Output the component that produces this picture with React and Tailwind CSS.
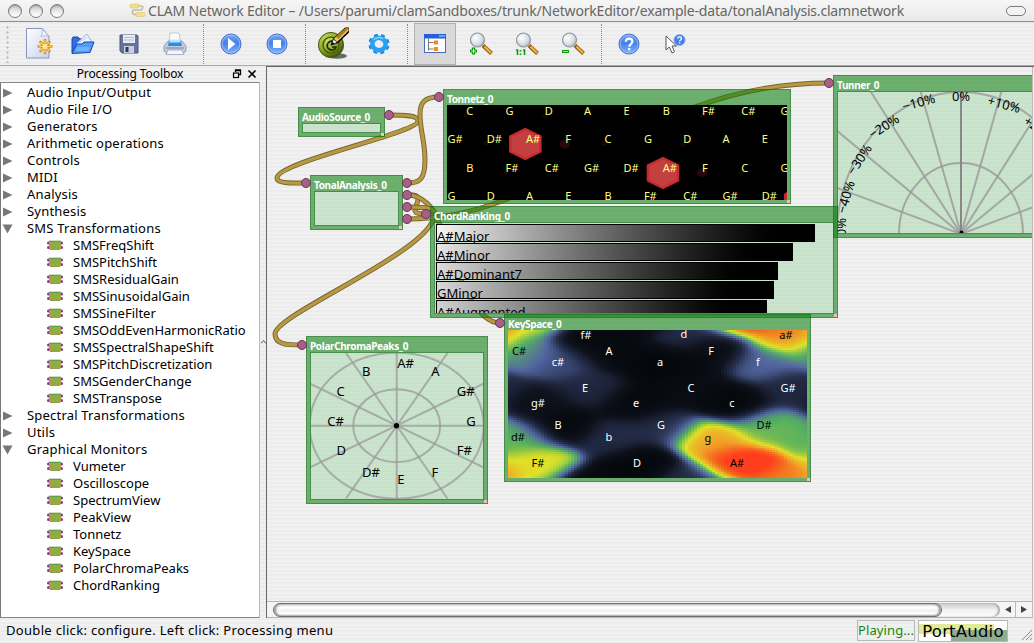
import React from "react";

const GREEN = "border-[rgba(13,127,17,0.58)]";

/* ---------- toolbar icons ---------- */

const NewIcon = () => (
  <svg width="30" height="34" viewBox="0 0 30 34">
    <defs>
      <linearGradient id="pg" x1="0" y1="0" x2="1" y2="1">
        <stop offset="0" stopColor="#fff" />
        <stop offset="1" stopColor="#c9d2ec" />
      </linearGradient>
    </defs>
    <path d="M2.500 1.500h16l6.500 8v21.500h-22.500z" fill="url(#pg)" stroke="#8b95bb" />
    <path d="M18 1.500c1 3 0 6-1 8 3-1 6-1 8 0z" fill="#f2f4fc" stroke="#a5aecb" strokeWidth=".8" />
    <g stroke="#e08a12" strokeWidth="2.6" strokeLinecap="round">
      <path d="M21 13v13M14.500 19.500h13M16.500 15l9 9M25.500 15l-9 9" />
    </g>
    <g stroke="#ffd45c" strokeWidth="1.2" strokeLinecap="round">
      <path d="M21 13.500v12M15 19.500h12M17 15.500l8 8M25 15.500l-8 8" />
    </g>
    <circle cx="21" cy="19.500" r="2.500" fill="#ffe79a" />
  </svg>
);

const OpenIcon = () => (
  <svg width="24" height="22" viewBox="0 0 24 22">
    <path d="M1 20V6l1-2h5l2 2h10v5" fill="#2f6fe0" stroke="#1746b4" />
    <path d="M6 10L16 1l5 8-3 5H6z" fill="#eef4ff" stroke="#8fa6d8" strokeWidth=".8" />
    <path d="M8 10l8-6" stroke="#b9c9ea" />
    <path d="M1 20.500L6 11h5l2-2h10l-4 10.500z" fill="#4f9bf6" stroke="#1746b4" />
    <path d="M6 14h13l-1.500 4H4z" fill="#7bbcff" opacity=".7" />
  </svg>
);

const SaveIcon = () => (
  <svg width="20" height="20" viewBox="0 0 20 20">
    <path d="M1 1h17l1 1v17H3l-2-2z" fill="#66749b" stroke="#4a5780" />
    <rect x="4" y="1" width="12" height="8" fill="#e8ecf6" />
    <path d="M5 3.500h10M5 6h10" stroke="#b3bcd3" />
    <rect x="5" y="12" width="10" height="7" fill="#c9cfdf" />
    <rect x="6.500" y="13" width="3" height="5" fill="#2f3a5c" />
  </svg>
);

const PrintIcon = () => (
  <svg width="24" height="24" viewBox="0 0 24 24">
    <path d="M7 1h9l2 11H6z" fill="#fdfdfe" stroke="#b5bccd" strokeWidth=".8" />
    <path d="M1 14l4-5h14l4 5v5l-2 2H3l-2-2z" fill="#c4cbdc" stroke="#8790a8" strokeWidth=".8" />
    <path d="M6 9h12l1 5H5z" fill="#2c8bea" />
    <path d="M7 7.500h10l.6 3H6.400z" fill="#b9e6ff" />
    <path d="M5 18h14l2 4.500H3z" fill="#f5f6fa" stroke="#9aa2b8" strokeWidth=".8" />
    <path d="M3 16h18" stroke="#7a839b" />
  </svg>
);

const Ball = ({ children, id }) => (
  <svg width="22" height="22" viewBox="0 0 22 22">
    <defs>
      <linearGradient id={id} x1="0" y1="0" x2="0" y2="1">
        <stop offset="0" stopColor="#7ba8f4" />
        <stop offset=".45" stopColor="#4480ea" />
        <stop offset="1" stopColor="#7fb6ff" />
      </linearGradient>
    </defs>
    <circle cx="11" cy="11" r="10" fill={`url(#${id})`} stroke="#4a70c8" strokeWidth="1" />
    <circle cx="11" cy="11" r="8.800" fill="none" stroke="#a9c8fb" strokeWidth=".7" />
    {children}
  </svg>
);

const EditIcon = () => (
  <svg width="32" height="33" viewBox="0 0 32 33">
    <defs>
      <radialGradient id="ed" cx=".35" cy=".3" r=".8">
        <stop offset="0" stopColor="#cbe368" />
        <stop offset=".55" stopColor="#86a722" />
        <stop offset="1" stopColor="#2c3b06" />
      </radialGradient>
    </defs>
    <ellipse cx="20" cy="29" rx="10" ry="2.800" fill="#222" opacity=".65" />
    <circle cx="14" cy="18" r="12.600" fill="url(#ed)" stroke="#4c5f12" />
    <circle cx="14" cy="18" r="8" fill="none" stroke="#4c600f" strokeWidth="1.600" />
    <path d="M18 15.500a4.500 4.500 0 1 0 1 4.500h-4" fill="none" stroke="#1d2605" strokeWidth="1.600" />
    <path d="M14 18l3-7 11-10h4v3L20 16z" fill="#e9c46a" stroke="#111" strokeWidth="1" />
    <path d="M19 9.500L28.500 1H32L21 12z" fill="#a77a1c" />
    <path d="M14 18l2.500-6 4 3.500z" fill="#f7efe0" stroke="#111" strokeWidth=".8" />
    <path d="M14 18l1.500-3 2 1.500z" fill="#000" />
    <path d="M20 16L32 4.500" stroke="#000" strokeWidth="1.600" />
  </svg>
);

const GearIcon = () => (
  <svg width="22" height="22" viewBox="0 0 22 22">
    <g transform="rotate(12 11 11)">
      <ellipse cx="11" cy="11" rx="8.600" ry="8.200" fill="none" stroke="#1e86dc" strokeWidth="4" strokeDasharray="3.500 3.100" />
      <ellipse cx="11" cy="11" rx="6.700" ry="6.200" fill="none" stroke="#2aa0f4" strokeWidth="4.600" />
      <path d="M5 8a7 6 0 0 1 9-3" fill="none" stroke="#86d1ff" strokeWidth="1.500" />
    </g>
  </svg>
);

const TreeIcon = () => (
  <svg width="22" height="19" viewBox="0 0 22 19">
    <rect x=".5" y=".5" width="21" height="18" fill="#fdfdff" stroke="#4a6fb8" />
    <rect x="0" y="0" width="22" height="4.500" fill="#2160d8" />
    <rect x="15" y="1" width="6" height="2" fill="#6fa0ff" />
    <path d="M4.500 4.500v12M4.500 8.500h5M4.500 15h5" stroke="#777" fill="none" />
    <rect x="10" y="6.500" width="4" height="4" fill="#f28c1c" />
    <rect x="10" y="13" width="4" height="4" fill="#f28c1c" />
  </svg>
);

const ZoomIcon = ({ children }) => (
  <svg width="24" height="24" viewBox="0 0 24 24">
    <defs>
      <radialGradient id="lens" cx=".35" cy=".35" r=".75">
        <stop offset="0" stopColor="#fff" />
        <stop offset=".6" stopColor="#d7e0e4" />
        <stop offset="1" stopColor="#a7b4ba" />
      </radialGradient>
    </defs>
    <path d="M14 13.500l8.500 8" stroke="#9a5a10" strokeWidth="4" />
    <path d="M15.500 14.500l6.500 6.500" stroke="#f5b548" strokeWidth="2" />
    <circle cx="8.500" cy="8" r="7" fill="url(#lens)" stroke="#8c979c" strokeWidth="1.200" />
    {children}
  </svg>
);

const WhatsIcon = () => (
  <svg width="22" height="22" viewBox="0 0 22 22">
    <path d="M2 3v14l3.300-3 2.700 6 2.500-1.200L8 13h4.500z" fill="#fff" stroke="#555" strokeWidth="1" />
    <circle cx="15.500" cy="7" r="5.600" fill="#4a7fe6" stroke="#8fb2f4" strokeWidth=".7" />
    <path d="M13.700 5.600c0-2.400 3.800-2.400 3.800 0 0 1.300-1.900 1.400-1.900 2.700" fill="none" stroke="#fff" strokeWidth="1.300" />
    <rect x="15" y="9.300" width="1.300" height="1.300" fill="#fff" />
  </svg>
);

const Tool = ({ children }) => <div className="flex h-full w-[46px] items-center justify-center">{children}</div>;
const Sep = () => (
  <div className="flex w-[10px] justify-center">
    <div className="h-[40px] border-l border-dotted border-[#8a8a8a]" />
  </div>
);

/* ---------- toolbox tree ---------- */

const TREE = [
  ["Audio Input/Output"],
  ["Audio File I/O"],
  ["Generators"],
  ["Arithmetic operations"],
  ["Controls"],
  ["MIDI"],
  ["Analysis"],
  ["Synthesis"],
  [
    "SMS Transformations",
    [
      "SMSFreqShift",
      "SMSPitchShift",
      "SMSResidualGain",
      "SMSSinusoidalGain",
      "SMSSineFilter",
      "SMSOddEvenHarmonicRatio",
      "SMSSpectralShapeShift",
      "SMSPitchDiscretization",
      "SMSGenderChange",
      "SMSTranspose",
    ],
  ],
  ["Spectral Transformations"],
  ["Utils"],
  [
    "Graphical Monitors",
    ["Vumeter", "Oscilloscope", "SpectrumView", "PeakView", "Tonnetz", "KeySpace", "PolarChromaPeaks", "ChordRanking"],
  ],
];

const Chip = () => (
  <svg width="18" height="11" viewBox="0 0 18 11" className="mr-[9px] shrink-0">
    <g fill="#97278f">
      <circle cx="2.500" cy="3" r="1.500" />
      <circle cx="2.500" cy="7.500" r="1.500" />
      <circle cx="15.500" cy="3" r="1.500" />
      <circle cx="15.500" cy="7.500" r="1.500" />
    </g>
    <rect x="3" y="1" width="12" height="8.500" rx="1" fill="#93ab45" />
    <path d="M3 1.200h12" stroke="#4c9a4c" strokeWidth="1" />
    <path d="M4 9.500h10" stroke="#8a8a3a" strokeWidth=".8" />
  </svg>
);

const Tree = () => (
  <div className="flex flex-col pt-px">
    {TREE.map(([name, kids]) => (
      <div key={name}>
        <div className="flex h-[17px] items-center">
          <svg width="26" height="11" viewBox="0 0 26 11" className="shrink-0">
            {kids ? <path d="M1.500 1.500h10L6.500 10.500z" fill="#777" /> : <path d="M2 1.500l9.500 4.500L2 10.500z" fill="#777" />}
          </svg>
          <span className="tracking-[0.2px] whitespace-nowrap">{name}</span>
        </div>
        {kids &&
          kids.map((k) => (
            <div key={k} className="flex h-[17px] items-center pl-[45px]">
              <Chip />
              <span className="whitespace-nowrap">{k}</span>
            </div>
          ))}
      </div>
    ))}
  </div>
);

/* ---------- network nodes ---------- */

const Node = ({ title, place, flush, children }) => (
  <div className={`absolute flex flex-col border border-[rgba(15,110,20,0.75)] ${place}`}>
    <div className="flex h-[15px] shrink-0 items-end bg-[rgba(13,127,17,0.58)] pl-[3px] text-[10px] leading-[12px] font-bold tracking-[-0.35px] whitespace-nowrap text-white">
      {title}
    </div>
    <div className={`flex min-h-0 flex-1 flex-col border-x-[3px] border-b-[3px] ${GREEN}`}>
      <div
        className={
          flush
            ? "min-h-0 flex-1 overflow-hidden"
            : "min-h-0 flex-1 overflow-hidden border border-[rgba(15,110,20,0.75)] bg-[rgba(93,190,98,0.25)] bg-clip-padding"
        }
      >
        {children}
      </div>
    </div>
    <div className="absolute right-0 bottom-0 size-[3px] bg-[#f3c2ae]" />
  </div>
);

const TONNETZ_ROWS = [
  [466.2, 115, ["C", "G", "D", "A", "E", "B", "F#", "C#", "G#"]],
  [447.4, 143, ["G#", "D#", "A#", "F", "C", "G", "D", "A", "E"]],
  [466.2, 172, ["B", "F#", "C#", "G#", "D#", "A#", "F", "C", "G"]],
  [447.4, 200, ["G", "D", "A", "E", "B", "F#", "C#", "G#", "D#"]],
];

const hex = (cx, cy, r) =>
  [
    [0, -r],
    [r, -r / 2],
    [r, r / 2],
    [0, r],
    [-r, r / 2],
    [-r, -r / 2],
  ]
    .map(([x, y]) => `${cx + x},${cy + y}`)
    .join(" ");

const Tonnetz = () => (
  <svg viewBox="447 105 340 95" className="block size-full bg-black" preserveAspectRatio="none">
    {[525.3, 663].map((x, i) => (
      <g key={x}>
        <polygon points={hex(x, i ? 173 : 144, 16.3)} fill="#c62a2c" />
        <polygon points={hex(x, i ? 173 : 144, 13.8)} fill="#c43f40" />
      </g>
    ))}
    <polygon points={hex(564.7, 144, 5)} fill="#280808" />
    <polygon points={hex(702.3, 172.5, 5)} fill="#280808" />
    {[[466, 115], [486, 143.5], [545, 116], [604, 144], [683, 145], [702, 115.5], [506, 173], [624, 173], [741, 173], [643, 200]].map(([x, y]) => (
      <polygon key={`${x}-${y}`} points={hex(x, y, 2.6)} fill="#1a0505" />
    ))}
    <path d="M788 191l-4 3v8h4z" fill="#c62a2c" />
    <g fill="#ffff86" fontSize="11">
      {TONNETZ_ROWS.map(([x, y, names]) =>
        names.map((n, i) => (
          <text key={`${y}-${i}`} x={x + i * 39.3} y={y}>
            {n}
          </text>
        ))
      )}
    </g>
  </svg>
);

const CHORDS = [
  ["A#Major", "w-[379px]", "from-[#f6f6f6]"],
  ["A#Minor", "w-[357px]", "from-[#e6e6e6]"],
  ["A#Dominant7", "w-[342px]", "from-[#dcdcdc]"],
  ["GMinor", "w-[338px]", "from-[#d8d8d8]"],
  ["A#Augmented", "w-[331px]", "from-[#d2d2d2]"],
];

const ChordRanking = () => (
  <div className="flex flex-col gap-px pt-px pl-px">
    {CHORDS.map(([name, w, from]) => (
      <div
        key={name}
        className={`h-[18px] shrink-0 border border-black bg-linear-to-r to-black to-97% pt-[3px] text-[13px] leading-[16px] whitespace-nowrap text-black ${w} ${from}`}
      >
        {name}
      </div>
    ))}
  </div>
);

const POLAR = [
  ["A#", 397.2, 367.7],
  ["A", 431.2, 376],
  ["G#", 456.8, 396.3],
  ["G", 466.2, 425.7],
  ["F#", 456.8, 455.3],
  ["F", 431.5, 476.7],
  ["E", 397.2, 484.3],
  ["D#", 362, 476.7],
  ["D", 336.5, 455.3],
  ["C#", 327.2, 425.7],
  ["C", 336.5, 396.3],
  ["B", 362, 375.7],
];

const PolarPeaks = () => (
  <svg viewBox="311 353 172 146" className="block size-full" preserveAspectRatio="none">
    <g stroke="#999" strokeOpacity=".75" strokeWidth="2" fill="none">
      <path d="M396.700 340v170M300 425.700h190M346 353l101.500 145.500M447.500 353L346 498.500M309.700 383.500l174 84M483.700 383.500l-174 84" />
      <ellipse cx="396.700" cy="425.700" rx="43.500" ry="36.500" />
      <ellipse cx="396.700" cy="425.700" rx="87" ry="73" />
    </g>
    <circle cx="396.500" cy="425.700" r="2.700" fill="#000" />
    <g fontSize="13" fill="#000">
      {POLAR.map(([n, x, y]) => (
        <text key={n} x={x} y={y}>
          {n}
        </text>
      ))}
    </g>
  </svg>
);

const DIAL = [
  ["0%", 961, 100.5, 0],
  ["−10%", 918.7, 107, -15],
  ["−20%", 884, 131, -33],
  ["−30%", 859.5, 164, -56],
  ["−40%", 846, 201.5, -74],
  ["−50%", 841.5, 239, -90],
  ["+10%", 1004, 109, 15],
  ["+20%", 1039, 133, 33],
];

const Tunner = () => (
  <svg viewBox="838 92 197 142" width="197" height="142" className="block">
    <g stroke="#999" strokeOpacity=".8" strokeWidth="2" fill="none">
      {[-72, -54, -36, -18, 18, 36, 54, 72].map((a) => (
        <path
          key={a}
          d={`M961 234L${961 + Math.sin((a * Math.PI) / 180) * 260} ${234 - Math.cos((a * Math.PI) / 180) * 298}`}
        />
      ))}
      <ellipse cx="961" cy="234" rx="62" ry="71" />
      <ellipse cx="961" cy="234" rx="124" ry="142" />
    </g>
    <path d="M961 90v144" stroke="#888" strokeWidth="2" />
    <circle cx="961.500" cy="232.500" r="2" fill="#000" />
    <g fontSize="13" fill="#000" textAnchor="middle">
      {DIAL.map(([n, x, y, r]) => (
        <text key={n} x={x} y={y} transform={`rotate(${r} ${x} ${y - 4.5})`}>
          {n}
        </text>
      ))}
    </g>
  </svg>
);

/* key, x, y, strength */
const KEYS = [
  ["f#", 586, 335, 0.02], ["d", 684, 334, 0.25], ["a#", 786, 335, 0.9],
  ["C#", 519, 351, 0.48], ["A", 609, 351, 0.04], ["F", 711, 351, 0.04],
  ["c#", 558, 362, 0.33], ["a", 660, 362, 0], ["f", 758, 362, 0.4],
  ["E", 585, 388, 0.22], ["C", 691, 388, 0.06], ["G#", 788, 388, 0.22],
  ["g#", 538, 403, 0.1], ["e", 636, 403, 0.02], ["c", 732, 403, 0],
  ["B", 558, 425, 0], ["G", 661, 425, 0.25], ["D#", 764, 425, 0.56],
  ["d#", 518, 437, 0.55], ["b", 609, 437, 0.24], ["g", 708, 438, 0.84],
  ["F#", 538, 463, 0.72], ["D", 637, 463, 0], ["A#", 737, 463, 1.03],
];
const RAMP = [
  [0, 4, 7, 10], [0.12, 14, 18, 28], [0.25, 37, 46, 74], [0.4, 82, 102, 160], [0.54, 85, 176, 96],
  [0.7, 222, 226, 40], [0.84, 240, 162, 38], [0.92, 244, 110, 30], [1, 255, 62, 30],
];
const ramp = (v) => {
  let i = 1;
  while (i < RAMP.length - 1 && v > RAMP[i][0]) i++;
  const a = RAMP[i - 1];
  const b = RAMP[i];
  const t = Math.min(1, Math.max(0, (v - a[0]) / (b[0] - a[0])));
  return `rgb(${[1, 2, 3].map((k) => Math.round(a[k] + (b[k] - a[k]) * t)).join(",")})`;
};
const CELLS = [];
for (let y = 330; y < 478; y += 2) {
  for (let x = 508; x < 807; x += 3) {
    let sum = 0;
    let wsum = 0;
    for (const [, kx, ky, v] of KEYS) {
      let dx = Math.abs(x + 1.5 - kx - 3);
      let dy = Math.abs(y + 1 - ky - 1);
      dx = Math.min(dx, Math.abs(302 - dx));
      dy = Math.min(dy, Math.abs(148 - dy));
      const w = Math.exp(-((dx / 1.9) ** 2 + dy ** 2) / 225);
      sum += w * v;
      wsum += w;
    }
    CELLS.push([x, y, ramp(sum / wsum)]);
  }
}

const KeySpace = () => (
  <svg viewBox="508 330 299 148" className="block size-full" preserveAspectRatio="none">
    <g shapeRendering="crispEdges">
      {CELLS.map(([x, y, c]) => (
        <rect key={`${x}-${y}`} x={x} y={y} width="3.100" height="2.100" fill={c} />
      ))}
    </g>
    <g fontSize="11" textAnchor="middle">
      {KEYS.map(([n, x, y, v]) => (
        <text key={n} x={x} y={y + 4} fill={v > 0.45 ? "#000" : "#fff"}>
          {n}
        </text>
      ))}
    </g>
  </svg>
);

const WIRES = [
  "M389 115C404 115 418 115 418 121C418 133 277 162 277 178C277 184 294 183 306 183",
  "M407 183C420 183 425 179 425 160C425 141 420 131 420 114C420 102 425 97 439 97",
  "M407 195C418 194 420 197 416 206C413 213 417 214 426 214",
  "M407 195C424 195 434 210 434 215C434 250 275 314 275 334C275 345 288 345 302 345",
  "M407 207C440 207 432 209 440 225C450 250 470 323 500 323",
  "M407 219C560 219 635 83 829 83",
];
const PORTS = [
  [389, 115], [306, 183], [407, 183], [407, 195], [407, 207], [407, 219],
  [426, 214], [439, 97], [829, 83], [302, 345], [500, 323],
];

const Canvas = () => (
  <div className="relative min-h-0 flex-1 overflow-hidden">
    <svg className="absolute top-0 left-0" width="765" height="533" viewBox="267 67 765 533">
      <g fill="none">
        {WIRES.map((d) => (
          <g key={d}>
            <path d={d} stroke="#75672f" strokeWidth="5" />
            <path d={d} stroke="#b99843" strokeWidth="3.200" />
          </g>
        ))}
      </g>
    </svg>
    <Node title="AudioSource_0" place="left-[31px] top-[40px] h-[30px] w-[87px]" />
    <Node title="TonalAnalysis_0" place="left-[43px] top-[108px] h-[55px] w-[93px]" />
    <Node title="Tonnetz_0" flush place="left-[176px] top-[22px] h-[115px] w-[348px]">
      <Tonnetz />
    </Node>
    <Node title="Tunner_0" place="left-[566px] top-[8px] h-[163px] w-[205px]">
      <Tunner />
    </Node>
    <Node title="ChordRanking_0" place="left-[163px] top-[139px] h-[112px] w-[408px]">
      <ChordRanking />
    </Node>
    <Node title="PolarChromaPeaks_0" place="left-[39px] top-[269px] h-[168px] w-[182px]">
      <PolarPeaks />
    </Node>
    <Node title="KeySpace_0" flush place="left-[237px] top-[247px] h-[168px] w-[307px]">
      <KeySpace />
    </Node>
    <svg className="absolute top-0 left-0" width="765" height="533" viewBox="267 67 765 533">
      {PORTS.map(([x, y]) => (
        <circle key={`${x}-${y}`} cx={x} cy={y} r="4.500" fill="#a75f86" stroke="#6b3554" />
      ))}
    </svg>
  </div>
);

export default function App() {
  return (
    <div className="flex h-[643px] w-[1034px] flex-col overflow-hidden bg-[repeating-linear-gradient(#f1f1f1_0_2px,#ececec_2px_4px)] font-['Noto_Sans','Open_Sans',sans-serif] text-[13px] text-black">
      <div className="flex h-[22px] shrink-0 items-center border-b border-[#8c8c8c] bg-[linear-gradient(#f6f6f6,#e9e9e9)]">
        <div className="flex w-[129px] shrink-0 gap-[7px] pl-[8px]">
          {[0, 1, 2].map((i) => (
            <div
              key={i}
              className="size-[14px] rounded-full border border-[#7d7d7d] bg-[linear-gradient(#c2c2c2,#ececec_55%,#fff)] shadow-[inset_0_1px_1px_#999]"
            />
          ))}
        </div>
        <svg width="17" height="15" viewBox="0 0 17 15">
          <path d="M8 3h4q2.500 0 1.500 2.500L12 7H5Q3 7 3.500 9.500T6 11.500h3" fill="none" stroke="#bdbdae" strokeWidth="1.600" />
          <rect x="1" y="1" width="9" height="4" rx="1" fill="#f6df80" stroke="#d7c37a" strokeWidth=".6" />
          <rect x="7" y="9.500" width="9" height="4" rx="1" fill="#f6df80" stroke="#d7c37a" strokeWidth=".6" />
        </svg>
        <span className="ml-[2px] text-[14px] leading-[20px] tracking-[-0.19px] whitespace-nowrap text-[#666]">
          CLAM Network Editor – /Users/parumi/clamSandboxes/trunk/NetworkEditor/example-data/tonalAnalysis.clamnetwork
        </span>
        <div className="mr-[8px] ml-auto h-[10px] w-[20px] shrink-0 rounded-full border-[1.5px] border-[#7c7c7c] bg-[#f2f2f2]" />
      </div>

      <div className="flex h-[44px] shrink-0 items-center border-b border-[#a8a8a8]">
        <div className="flex w-[14px] justify-center">
          <div className="h-[38px] w-[5px] bg-[radial-gradient(circle,#c4c4c4_1px,transparent_1.400px)] bg-size-[5px_5px]" />
        </div>
        <div className="flex h-full w-[46px] items-center justify-center pl-[3px]"><NewIcon /></div>
        <Tool><OpenIcon /></Tool>
        <Tool><SaveIcon /></Tool>
        <Tool><PrintIcon /></Tool>
        <Sep />
        <Tool>
          <Ball id="b1"><path d="M8 5l7.500 6L8 17z" fill="#fff" /></Ball>
        </Tool>
        <Tool>
          <Ball id="b2"><rect x="7" y="7" width="8" height="8" fill="#fff" /></Ball>
        </Tool>
        <Sep />
        <Tool><EditIcon /></Tool>
        <Tool><GearIcon /></Tool>
        <Sep />
        <Tool>
          <div className="flex h-[42px] w-[42px] items-center justify-center border border-[#b0b0b0] bg-[#d9d9d9]">
            <TreeIcon />
          </div>
        </Tool>
        <Tool>
          <ZoomIcon>
            <path d="M4.500 15.500v7M1 19h7" stroke="#0a9a0a" strokeWidth="3.200" />
            <path d="M4.500 16.700v4.600M2.200 19h4.600" stroke="#d8ffd8" strokeWidth="1" />
          </ZoomIcon>
        </Tool>
        <Tool>
          <ZoomIcon>
            <path d="M1 18h1.500v5M8 18h1.500v5M5.500 18v1.500M5.500 21.500v1.500" stroke="#0a9a0a" strokeWidth="1.600" fill="none" />
          </ZoomIcon>
        </Tool>
        <Tool>
          <ZoomIcon>
            <path d="M1 19.500h7" stroke="#0a9a0a" strokeWidth="3" />
            <path d="M2 19.500h5" stroke="#b9f5b9" strokeWidth=".8" />
          </ZoomIcon>
        </Tool>
        <Sep />
        <Tool>
          <Ball id="b3">
            <path d="M7.800 8.800c0-4.400 6.600-4.200 6.600 0 0 2.200-3.200 2.400-3.200 4.900" fill="none" stroke="#fff" strokeWidth="2.200" />
            <rect x="10" y="15" width="2.300" height="2.300" fill="#fff" />
          </Ball>
        </Tool>
        <Tool><WhatsIcon /></Tool>
      </div>

      <div className="flex min-h-0 flex-1">
        <div className="flex w-[260px] shrink-0 flex-col">
          <div className="flex h-[16px] shrink-0 items-center">
            <span className="w-[232px] pl-[28px] text-center text-[12px] leading-[16px] tracking-[-0.1px]">Processing Toolbox</span>
            <svg width="26" height="10" viewBox="0 0 26 10" fill="none" stroke="#000">
              <path d="M3.500 3V1h5v4.500H7M3.500 1.500h5" strokeWidth="1.300" />
              <rect x="1.500" y="4" width="5" height="4.500" strokeWidth="1.200" />
              <path d="M16.500 1.500l7 7M23.500 1.500l-7 7" strokeWidth="1.600" />
            </svg>
          </div>
          <div className="min-h-0 flex-1 overflow-hidden border border-t-[#888] border-r-[#bbb] border-b-[#888] border-l-[#777] bg-white">
            <Tree />
          </div>
        </div>
        <div className="flex w-[6px] shrink-0 items-center justify-center">
          <svg width="5" height="4" viewBox="0 0 5 4"><path d="M0 3.500L2.500.5 5 3.500" fill="none" stroke="#555" /></svg>
        </div>
        <div className="flex min-w-0 flex-1 flex-col border-t border-l border-[#666]">
          <div className="mr-px flex min-h-0 flex-1 flex-col border-r border-[#bbb]">
            <Canvas />
            <div className="flex h-[17px] shrink-0 items-center border-y border-[#b5b5b5] bg-[#f4f4f4]">
              <div className="ml-[6px] h-[14px] w-[727px] rounded-full bg-[linear-gradient(#c6c6c6,#f2f2f2_50%,#fff)] shadow-[inset_-2px_0_2px_#aaa]">
                <div className="h-[14px] w-[669px] rounded-full border border-[#6f6f6f] bg-[linear-gradient(#e2e2e2,#fff_30%,#f0f0f0_55%,#fff_80%,#ccc)] shadow-[inset_2px_0_2px_#999,inset_-2px_0_2px_#999]" />
              </div>
              <div className="flex h-full w-[15px] items-center justify-center">
                <svg width="6" height="8"><path d="M6 0v7L0 3.500z" fill="#444" /></svg>
              </div>
              <div className="flex h-full w-[16px] items-center justify-center border-l border-[#bbb]">
                <svg width="6" height="8"><path d="M0 0v7l6-3.500z" fill="#444" /></svg>
              </div>
            </div>
          </div>
        </div>
      </div>

      <div className="flex h-[25px] shrink-0 items-center">
        <span className="flex-1 pl-[6px] tracking-[0.32px] whitespace-nowrap">Double click: configure. Left click: Processing menu</span>
        <div className="mr-[3px] flex h-[21px] w-[58px] items-center justify-center border border-[#b9b9b9] tracking-[0.1px] whitespace-nowrap text-[#128a12]">
          Playing...
        </div>
        <div className="flex h-[22px] w-[90px] items-center justify-center border border-[#b9b9b9] bg-[linear-gradient(#8fab92,#8fab92),linear-gradient(#e0eb98,#e0eb98),linear-gradient(#fff,#fff)] bg-size-[56px_11px,75px_10px,100%_100%] bg-position-[32px_9px,0_3px,0_0] bg-no-repeat pt-[2px] font-['DejaVu_Sans',sans-serif] text-[16.500px] leading-[20px] tracking-[0.2px]">
          PortAudio
        </div>
        <svg width="26" height="20" viewBox="0 0 26 20" stroke="#888">
          <path d="M14 19L24 9M18 19l6-6M22 19l2-2" strokeWidth="1" />
        </svg>
      </div>
    </div>
  );
}
